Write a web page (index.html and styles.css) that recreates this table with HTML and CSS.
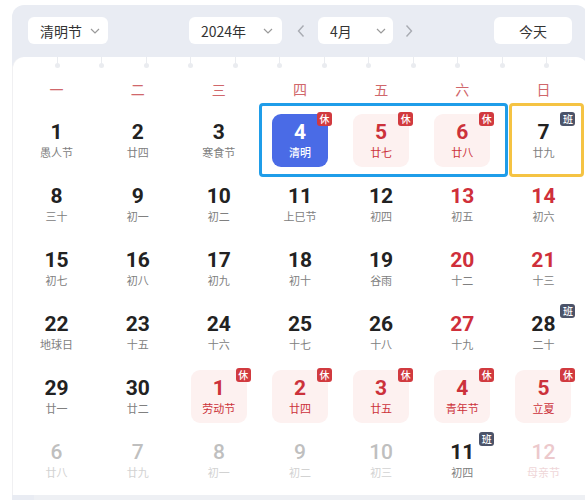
FILE: index.html
```html
<!DOCTYPE html>
<html lang="zh-CN">
<head>
<meta charset="utf-8">
<link rel="stylesheet" href="styles.css">
</head>
<body>
<div class="cal">
  <div class="toolbar">
    <div class="select sel-holiday"><span>清明节</span><svg class="chev" viewBox="0 0 10 6"><path d="M1 1l4 4 4-4"/></svg></div>
    <div class="mid">
      <div class="select sel-year"><span>2024年</span><svg class="chev" viewBox="0 0 10 6"><path d="M1 1l4 4 4-4"/></svg></div>
      <svg class="arrow arrow-l" viewBox="0 0 8 14"><path d="M6.5 1.5L1.5 7l5 5.5"/></svg>
      <div class="select sel-month"><span>4月</span><svg class="chev" viewBox="0 0 10 6"><path d="M1 1l4 4 4-4"/></svg></div>
      <svg class="arrow arrow-r" viewBox="0 0 8 14"><path d="M1.5 1.5L6.5 7l-5 5.5"/></svg>
    </div>
    <div class="today">今天</div>
  </div>
  <div class="card">
    <div class="pins">
      <i></i><i></i><i></i><i></i><i></i><i></i><i></i><i></i><i></i><i></i><i></i><i></i>
    </div>
    <div class="weekdays">
      <span>一</span><span>二</span><span>三</span><span>四</span><span>五</span><span>六</span><span>日</span>
    </div>
    <div class="grid">
      <div class="cell"><div class="box"><b>1</b><em>愚人节</em></div></div>
      <div class="cell"><div class="box"><b>2</b><em>廿四</em></div></div>
      <div class="cell"><div class="box"><b>3</b><em>寒食节</em></div></div>
      <div class="cell"><div class="box sel"><b>4</b><em>清明</em><s class="tag rest">休</s></div></div>
      <div class="cell"><div class="box off"><b>5</b><em>廿七</em><s class="tag rest">休</s></div></div>
      <div class="cell"><div class="box off"><b>6</b><em>廿八</em><s class="tag rest">休</s></div></div>
      <div class="cell"><div class="box"><b>7</b><em>廿九</em><s class="tag work">班</s></div></div>

      <div class="cell"><div class="box"><b>8</b><em>三十</em></div></div>
      <div class="cell"><div class="box"><b>9</b><em>初一</em></div></div>
      <div class="cell"><div class="box"><b>10</b><em>初二</em></div></div>
      <div class="cell"><div class="box"><b>11</b><em>上巳节</em></div></div>
      <div class="cell"><div class="box"><b>12</b><em>初四</em></div></div>
      <div class="cell"><div class="box wk"><b>13</b><em>初五</em></div></div>
      <div class="cell"><div class="box wk"><b>14</b><em>初六</em></div></div>

      <div class="cell"><div class="box"><b>15</b><em>初七</em></div></div>
      <div class="cell"><div class="box"><b>16</b><em>初八</em></div></div>
      <div class="cell"><div class="box"><b>17</b><em>初九</em></div></div>
      <div class="cell"><div class="box"><b>18</b><em>初十</em></div></div>
      <div class="cell"><div class="box"><b>19</b><em>谷雨</em></div></div>
      <div class="cell"><div class="box wk"><b>20</b><em>十二</em></div></div>
      <div class="cell"><div class="box wk"><b>21</b><em>十三</em></div></div>

      <div class="cell"><div class="box"><b>22</b><em>地球日</em></div></div>
      <div class="cell"><div class="box"><b>23</b><em>十五</em></div></div>
      <div class="cell"><div class="box"><b>24</b><em>十六</em></div></div>
      <div class="cell"><div class="box"><b>25</b><em>十七</em></div></div>
      <div class="cell"><div class="box"><b>26</b><em>十八</em></div></div>
      <div class="cell"><div class="box wk"><b>27</b><em>十九</em></div></div>
      <div class="cell"><div class="box"><b>28</b><em>二十</em><s class="tag work">班</s></div></div>

      <div class="cell"><div class="box"><b>29</b><em>廿一</em></div></div>
      <div class="cell"><div class="box"><b>30</b><em>廿二</em></div></div>
      <div class="cell"><div class="box off"><b>1</b><em>劳动节</em><s class="tag rest">休</s></div></div>
      <div class="cell"><div class="box off"><b>2</b><em>廿四</em><s class="tag rest">休</s></div></div>
      <div class="cell"><div class="box off"><b>3</b><em>廿五</em><s class="tag rest">休</s></div></div>
      <div class="cell"><div class="box off"><b>4</b><em>青年节</em><s class="tag rest">休</s></div></div>
      <div class="cell"><div class="box off"><b>5</b><em>立夏</em><s class="tag rest">休</s></div></div>

      <div class="cell"><div class="box other"><b>6</b><em>廿八</em></div></div>
      <div class="cell"><div class="box other"><b>7</b><em>廿九</em></div></div>
      <div class="cell"><div class="box other"><b>8</b><em>初一</em></div></div>
      <div class="cell"><div class="box other"><b>9</b><em>初二</em></div></div>
      <div class="cell"><div class="box other"><b>10</b><em>初三</em></div></div>
      <div class="cell"><div class="box"><b>11</b><em>初四</em><s class="tag work">班</s></div></div>
      <div class="cell"><div class="box other-wk"><b>12</b><em>母亲节</em></div></div>
    </div>
    <div class="mark mark-blue"></div>
    <div class="mark mark-yellow"></div>
  </div>
  <div class="foot"></div>
</div>
</body>
</html>
```
FILE: styles.css
```css
html, body {
  margin: 0;
  padding: 0;
  background: #ffffff;
  overflow: hidden;
  width: 585px;
  height: 500px;
}
body {
  font-family: "Noto Sans CJK SC", "Noto Sans", sans-serif;
  color: #222;
}
.cal {
  margin: 5px 0 0 12px;
  width: 576px;
  background: #e9ecf3;
  border-radius: 12px 12px 0 0;
  padding-top: 12px;
}
.toolbar {
  display: flex;
  justify-content: space-between;
  align-items: center;
  padding: 0 16px;
  height: 27px;
}
.mid {
  display: flex;
  align-items: center;
}
.select {
  height: 27px;
  background: #fff;
  border-radius: 6px;
  display: flex;
  align-items: center;
  justify-content: space-between;
  padding: 0 8px 0 12px;
  box-sizing: border-box;
  font-size: 14px;
  color: #333;
}
.sel-holiday { width: 80px; }
.sel-year { width: 93px; padding-right: 9px; }
.sel-month { width: 75px; padding-right: 7px; }
.chev {
  width: 10px;
  height: 6px;
  fill: none;
  stroke: #9a9a9a;
  stroke-width: 1.2;
}
.arrow {
  width: 8px;
  height: 14px;
  fill: none;
  stroke: #a8abb2;
  stroke-width: 1.4;
}
.arrow-l { margin: 0 13px 0 15px; }
.arrow-r { margin-left: 12px; }
.today {
  width: 78px;
  height: 27px;
  background: #fff;
  border-radius: 6px;
  display: flex;
  align-items: center;
  justify-content: center;
  font-size: 14px;
  color: #333;
}
.card {
  position: relative;
  margin-top: 13px;
  background: #fff;
  border-radius: 12px 12px 0 0;
  border-left: 1px solid #f0f0f2;
  padding: 0 4px 3px 3px;
}
.pins {
  display: flex;
  gap: 39.5px;
  padding-left: 38.5px;
  height: 12px;
}
.pins i {
  position: relative;
  width: 5px;
  height: 12px;
}
.pins i::before {
  content: "";
  position: absolute;
  left: 2px;
  top: 0;
  width: 1px;
  height: 7px;
  background: #eaecf0;
}
.pins i::after {
  content: "";
  position: absolute;
  left: 0;
  top: 6px;
  width: 5px;
  height: 5px;
  border-radius: 50%;
  background: #eaecf0;
}
.weekdays {
  display: grid;
  grid-template-columns: repeat(7, 1fr);
  height: 39px;
  align-items: center;
  text-align: center;
  font-size: 14px;
  color: #d0676b;
}
.grid {
  display: grid;
  grid-template-columns: repeat(7, 1fr);
  grid-auto-rows: 64px;
}
.cell {
  display: flex;
  justify-content: center;
  align-items: center;
}
.box {
  position: relative;
  width: 56px;
  height: 53px;
  border-radius: 9px;
  display: flex;
  flex-direction: column;
  align-items: center;
  justify-content: center;
}
.box b {
  font-family: Roboto, "Noto Sans", sans-serif;
  font-weight: 700;
  font-size: 21px;
  line-height: 24px;
  color: #222;
}
.box em {
  font-style: normal;
  font-size: 11px;
  line-height: 17px;
  color: #808080;
}
.box.wk b { color: #cf2f3a; }
.box.off { background: #fdf1f0; }
.box.off b, .box.off em { color: #cc323b; }
.box.sel { background: #4a6be6; }
.box.sel b, .box.sel em { color: #fff; }
.box.sel em { font-weight: 500; }
.box.other b { color: #bfbfbf; font-weight: 500; }
.box.other em { color: #d2d2d2; }
.box.other-wk b { color: #ecc9cc; font-weight: 500; }
.box.other-wk em { color: #efd6d8; }
.tag {
  position: absolute;
  top: -2px;
  right: -4px;
  width: 15px;
  height: 14px;
  border-radius: 3px;
  text-decoration: none;
  color: #fff;
  font-size: 10px;
  line-height: 14px;
  text-align: center;
  font-weight: 500;
}
.tag.rest { background: #d13a3f; }
.tag.work { background: #4b5369; }
.mark {
  position: absolute;
  box-sizing: border-box;
  border-radius: 4px;
  border: 3px solid;
}
.mark-blue {
  left: 246px;
  top: 46px;
  width: 249px;
  height: 74px;
  border-color: #1f9de9;
}
.mark-yellow {
  left: 496px;
  top: 46px;
  width: 75px;
  height: 74px;
  border-color: #f5c343;
}
.foot {
  height: 10px;
  margin-left: 22px;
  background: #eef0f4;
}
```
